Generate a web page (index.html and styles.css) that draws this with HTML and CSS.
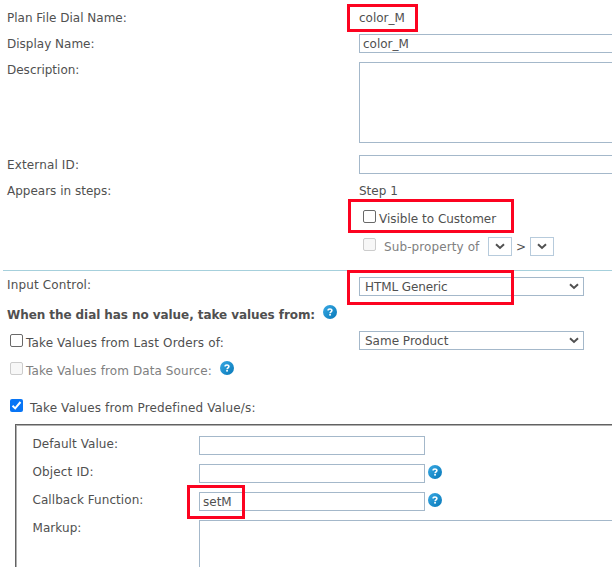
FILE: index.html
```html
<!DOCTYPE html>
<html lang="en">
<head>
<meta charset="utf-8">
<title>Dial properties</title>
<link rel="stylesheet" href="styles.css">
</head>
<body>
<svg class="defs" width="0" height="0">
  <defs>
    <linearGradient id="blue" x1="0" y1="0" x2="1" y2="1"><stop offset="0" stop-color="#38a9e4"/><stop offset="1" stop-color="#0878b8"/></linearGradient>
    <symbol id="help" viewBox="0 0 14 14"><circle cx="7" cy="7" r="7" fill="url(#blue)"/><path d="M5.1 5.5C5.1 3.5 8.9 3.5 8.9 5.5C8.9 6.8 7.1 6.8 7.1 8.2" fill="none" stroke="#fff" stroke-width="1.6"/><rect x="6.2" y="9" width="1.7" height="1.6" fill="#fff"/></symbol>
    <symbol id="chevron" viewBox="0 0 10 7"><path d="M1 1.3L5 5L9 1.3" fill="none" stroke="#505050" stroke-width="2"/></symbol>
  </defs>
</svg>
<main class="form">
  <section class="general">
    <div class="row"><span>Plan File Dial Name:</span><div class="cell"><span>color_M</span><i class="mark mark-name"></i></div></div>
    <div class="row"><span>Display Name:</span><div class="cell"><div class="field wide up">color_M</div></div></div>
    <div class="row tall"><span>Description:</span><div class="cell"><div class="field wide area"></div></div></div>
    <div class="row"><span class="spaced">External ID:</span><div class="cell"><div class="field wide up"></div></div></div>
    <div class="row step"><span>Appears in steps:</span><div class="cell">Step 1</div></div>
    <div class="row step"><span></span><div class="cell option"><i class="check"></i><span>Visible to Customer</span><i class="mark mark-visible"></i></div></div>
    <div class="row sub"><span></span><div class="cell option"><i class="check disabled"></i><span class="muted sub-text">Sub-property of</span><div class="select mini"><svg><use href="#chevron"/></svg></div><span class="gt">&gt;</span><div class="select mini"><svg><use href="#chevron"/></svg></div></div></div>
  </section>
  <section class="values">
    <div class="row control"><span class="spaced">Input Control:</span><div class="cell"><div class="select down"><span class="tight">HTML Generic</span><svg><use href="#chevron"/></svg></div><i class="mark mark-control"></i></div></div>
    <div class="row heading"><strong>When the dial has no value, take values from:</strong><svg class="help"><use href="#help"/></svg></div>
    <div class="row orders"><div class="option"><i class="check"></i><span class="spaced">Take Values from Last Orders of:</span></div><div class="cell"><div class="select lift"><span>Same Product</span><svg><use href="#chevron"/></svg></div></div></div>
    <div class="row source option"><i class="check disabled"></i><span class="muted">Take Values from Data Source:</span><svg class="help"><use href="#help"/></svg></div>
    <div class="row predefined option"><i class="check checked"><svg viewBox="0 0 13 13"><path d="M2.5 6.8L5.2 9.4L10.5 3" fill="none" stroke="#fff" stroke-width="2"/></svg></i><span class="spaced">Take Values from Predefined Value/s:</span></div>
    <div class="box">
      <div class="brow"><span>Default Value:</span><div class="field"></div></div>
      <div class="brow"><span class="spaced">Object ID:</span><div class="field"></div><svg class="help"><use href="#help"/></svg></div>
      <div class="brow"><span>Callback Function:</span><div class="cell"><div class="field">setM</div><i class="mark mark-callback"></i></div><svg class="help"><use href="#help"/></svg></div>
      <div class="brow"><span>Markup:</span><div class="field markup"></div></div>
    </div>
  </section>
</main>
</body>
</html>
```
FILE: styles.css
```css
* { box-sizing: border-box; }
body { margin: 0; background: #fff; }
.defs { position: absolute; }
.form { width: 612px; height: 567px; overflow: hidden; padding-top: 9px; color: #505050; font: 12px/18px "DejaVu Sans", Verdana, sans-serif; white-space: nowrap; }
.row { display: grid; grid-template-columns: 352px 253px; height: 26px; padding-left: 7px; }
.tall { height: 95px; }
.step { height: 28px; }
.sub { height: 32px; }
.cell { position: relative; height: 18px; }
.field { width: 226px; height: 19px; border: 1px solid #a4b8ca; padding: 0 3px; line-height: 18px; }
.wide { width: 270px; }
.up { margin-top: -1px; }
.area { height: 81px; margin-top: 1px; }
.option { display: flex; }
.spaced { letter-spacing: 0.14px; }
.tight { letter-spacing: -0.1px; }
.check { display: block; flex: none; width: 13px; height: 13px; border: 1px solid #696969; border-radius: 2px; background: #fff; margin-right: 3px; }
.cell .check { margin-left: 4px; }
.disabled { border-color: #ccc; background: #f7f7f7; }
.checked { border: 0; background: #0875f5; }
.checked svg { display: block; }
.muted { color: #808080; }
.sub-text { width: 104px; margin-left: 5px; letter-spacing: 0.1px; }
.gt { width: 18px; padding-left: 4px; }
.select { display: flex; justify-content: space-between; align-items: center; width: 225px; height: 19px; border: 1px solid #a4b8ca; padding: 0 4px 0 5px; }
.select svg { width: 10px; height: 7px; }
.mini { width: 24px; margin-top: -1px; padding: 0 6px; border-color: #b7cbdc; }
.down { margin-top: 1px; }
.lift { margin-top: -3px; }
.values { margin-left: 3px; border-top: 1px solid #a6d0dc; padding-top: 5px; }
.values .row { padding-left: 4px; }
.control { height: 30px; }
.values .heading { display: flex; height: 28px; }
.heading strong { letter-spacing: -0.07px; }
.help { flex: none; width: 14px; height: 14px; margin: -1px 0 0 8px; }
.values .orders { height: 28px; }
.orders .check, .source .check, .predefined .check { margin-left: 3px; }
.values .source { display: flex; height: 37px; }
.source .muted { letter-spacing: 0.1px; }
.values .predefined { display: flex; height: 25px; }
.predefined .check { margin-right: 7px; }
.box { width: 610px; height: 200px; margin-left: 12px; border: 1px solid #626262; box-shadow: inset 1px 1px #b0b0b0; padding: 11px 0 0 16px; }
.brow { display: grid; grid-template-columns: 167px 226px 14px; height: 28px; }
.brow > span { margin-top: -1px; padding-left: 0.5px; }
.brow > span:not(.spaced) { letter-spacing: 0.06px; }
.brow .help { margin: 1px 0 0 3px; }
.markup { width: 440px; height: 120px; }
.mark { position: absolute; border: 3px solid #fc0320; }
.mark-name { left: -12px; top: -5px; width: 71px; height: 28px; }
.mark-visible { left: -11px; top: -11px; width: 166px; height: 34px; }
.mark-control { left: -12px; top: -6px; width: 167px; height: 35px; }
.mark-callback { left: -12px; top: -7px; width: 58px; height: 34px; }
```
